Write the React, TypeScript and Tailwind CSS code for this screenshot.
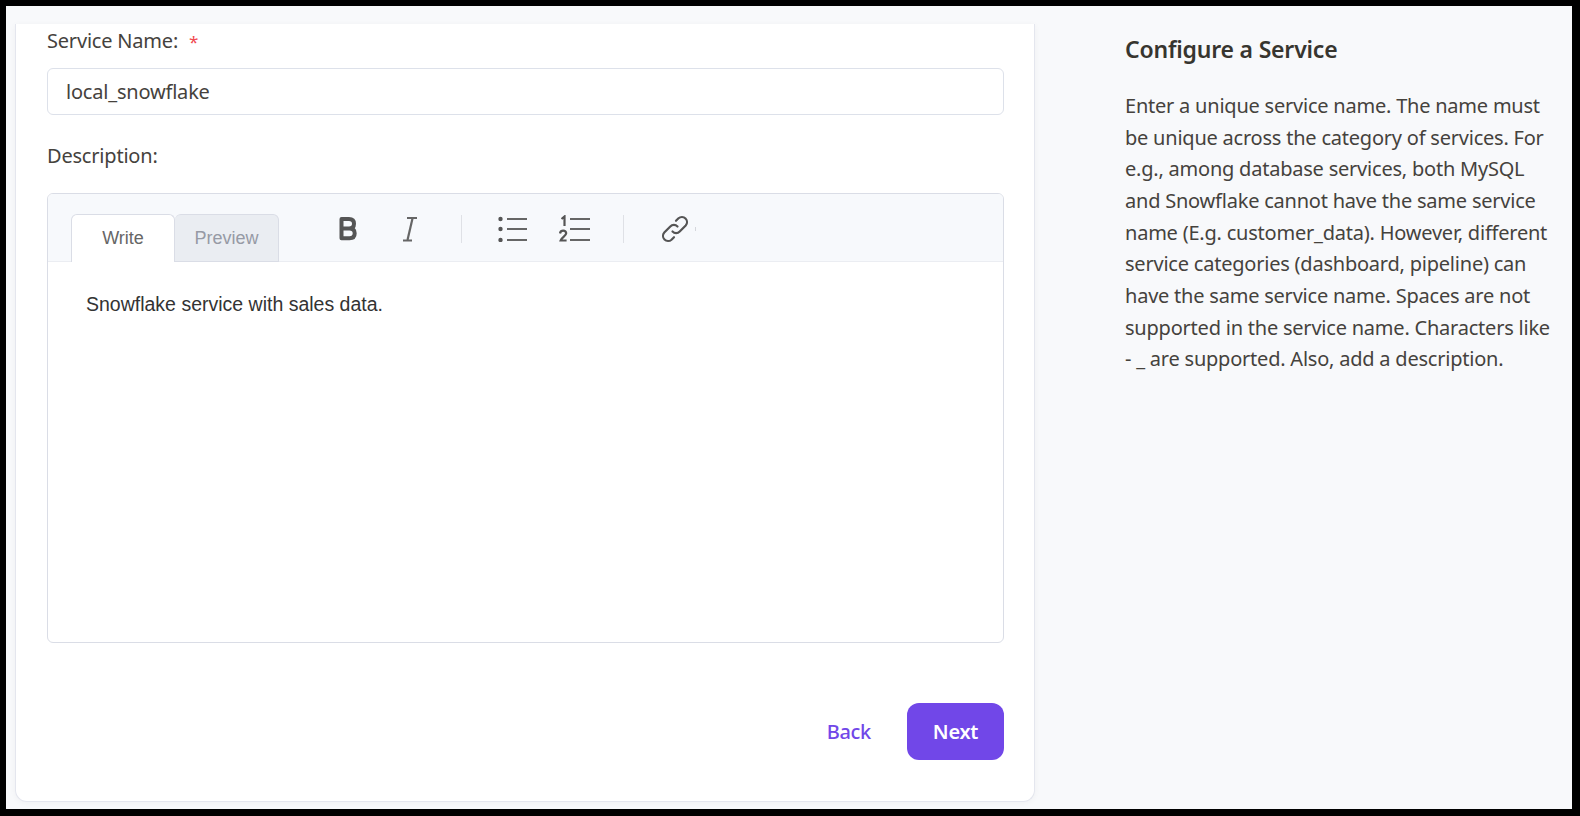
import React from 'react';

const IconBold = () => (
  <svg width="20" height="26" viewBox="0 0 20 26" fill="none" className="ml-[59px]">
    <path d="M3.500 3h7.500c3.200 0 5 1.900 5 4.800 0 2.800-1.800 4.700-5 4.700H3.500M3.500 12.500H11.500c3.400 0 5.200 1.900 5.200 4.800 0 3-1.800 5-5.200 5H3.500V3Z" stroke="#555" strokeWidth="4" strokeLinejoin="round" />
  </svg>
);

const IconItalic = () => (
  <svg width="16" height="26" viewBox="0 0 16 26" fill="none" className="ml-[44px]">
    <path d="M10.500 2.500 5.500 24" stroke="#666" strokeWidth="2.200" />
    <path d="M5 2h10M1 24.500h9" stroke="#666" strokeWidth="1.800" />
  </svg>
);

const IconList = () => (
  <svg width="29" height="26" viewBox="0 0 29 26" fill="none">
    <circle cx="2.500" cy="3" r="2.200" fill="#555" />
    <circle cx="2.500" cy="13" r="2.200" fill="#555" />
    <circle cx="2.500" cy="24" r="2.200" fill="#555" />
    <path d="M9 3h20M9 13h20M9 24h20" stroke="#666" strokeWidth="2.200" />
  </svg>
);

const IconOrdered = () => (
  <svg width="31" height="28" viewBox="0 0 31 28" fill="none" className="ml-[32px]">
    <path d="M2.500 4 5.500 1.500V11" stroke="#555" strokeWidth="2.200" />
    <path d="M1 18.500c.3-2 1.700-2.800 3.200-2.800 1.800 0 3 1 3 2.600 0 2.600-4.700 4.200-5.600 7.200h6" stroke="#555" strokeWidth="2.200" />
    <path d="M11 4h20M11 14h20M11 25h20" stroke="#666" strokeWidth="2.200" />
  </svg>
);

const IconLink = () => (
  <svg width="28" height="28" viewBox="0 0 28 28" fill="none" className="ml-[37px]">
    <path d="M11.500 16.500a5 5 0 0 0 7.200 0l6-6a5.100 5.100 0 0 0-7.200-7.200l-2.500 2.500" stroke="#555" strokeWidth="2.200" strokeLinecap="round" />
    <path d="M16.500 11.500a5 5 0 0 0-7.200 0l-6 6a5.100 5.100 0 0 0 7.200 7.200l2.500-2.500" stroke="#555" strokeWidth="2.200" strokeLinecap="round" />
  </svg>
);

export default function App() {
  return (
    <div className="h-[816px] w-[1580px] bg-black pt-[6px] pl-[6px] pr-[8px] pb-[7px] overflow-hidden font-['Noto_Sans',sans-serif] text-[#45423d]">
      <div className="h-full bg-[#f8f9fb] flex pt-[18px] pl-[9px]">
        {/* Form card */}
        <div className="w-[1020px] h-[778px] bg-white rounded-b-[12px] border-x border-b border-[#e4e6ee] shadow-[0_1px_6px_rgba(0,0,0,0.04)] pl-[31px] pr-[30px] shrink-0 flex flex-col">
          <label className="block h-[33px] pt-px text-[20px] leading-[32px] tracking-[-0.2px]">
            Service Name:<span className="text-[#f0494f] text-[17px] leading-none ml-[11px]">*</span>
          </label>
          <div className="mt-[11px] h-[47px] border border-[#dde1ea] rounded-[6px] flex items-center px-[18px] text-[20px] tracking-[-0.2px] text-[#45423d]">
            local_snowflake
          </div>
          <label className="block mt-[25px] text-[20px] leading-[32px] tracking-[-0.2px]">Description:</label>

          {/* Markdown editor */}
          <div className="mt-[21px] h-[450px] border border-[#dadde6] rounded-[6px] overflow-hidden font-['Liberation_Sans',sans-serif]">
            <div className="h-[68px] bg-[#f7f9fc] border-b border-[#ebedf2] flex items-end pl-[23px]">
              <div className="w-[104px] h-[48px] -mb-px bg-white border border-b-0 border-[#dadde6] rounded-t-[6px] flex items-center justify-center text-[18px] text-[#666]">
                Write
              </div>
              <div className="w-[104px] h-[48px] -mb-px bg-[#eaedf2] border border-l-0 border-[#dadde6] rounded-t-[6px] flex items-center justify-center text-[18px] text-[#969aa5]">
                Preview
              </div>
              <div className="self-start mt-[21px] flex items-center">
                <IconBold />
                <IconItalic />
                <div className="ml-[43px] mr-[36px] w-px h-[28px] bg-[#dfe1e6]" />
                <IconList />
                <IconOrdered />
                <div className="ml-[33px] w-px h-[28px] bg-[#dfe1e6]" />
                <IconLink />
                <div className="ml-[6px] w-px h-[4px] bg-[#d5d7dc]" />
              </div>
            </div>
            <div className="px-[38px] pt-[28px] text-[19.500px] leading-[28px] text-[#333]">
              Snowflake service with sales data.
            </div>
          </div>

          {/* Actions */}
          <div className="mt-[60px] flex items-center justify-end">
            <button className="text-[#7147e8] text-[20px] font-medium tracking-[-0.3px] mr-[36px]">Back</button>
            <button className="w-[97px] h-[57px] rounded-[12px] bg-[#7147e8] text-white text-[20px] font-semibold tracking-[-0.3px]">
              Next
            </button>
          </div>
        </div>

        {/* Help panel */}
        <div className="pl-[90px] pr-[20px] flex-1 min-w-0">
          <h2 className="pt-[9px] text-[23px] leading-[32px] font-semibold tracking-[-0.2px] text-[#37352f]">Configure a Service</h2>
          <p className="mt-[25px] text-[20px] leading-[31.650px] tracking-[-0.22px]">
            Enter a unique service name. The name must be unique across the category of services. For e.g., among database services, both MySQL and Snowflake cannot have the same service name (E.g. customer_data). However, different service categories (dashboard, pipeline) can have the same service name. Spaces are not supported in the service name. Characters like - _ are supported. Also, add a description.
          </p>
        </div>
      </div>
    </div>
  );
}
